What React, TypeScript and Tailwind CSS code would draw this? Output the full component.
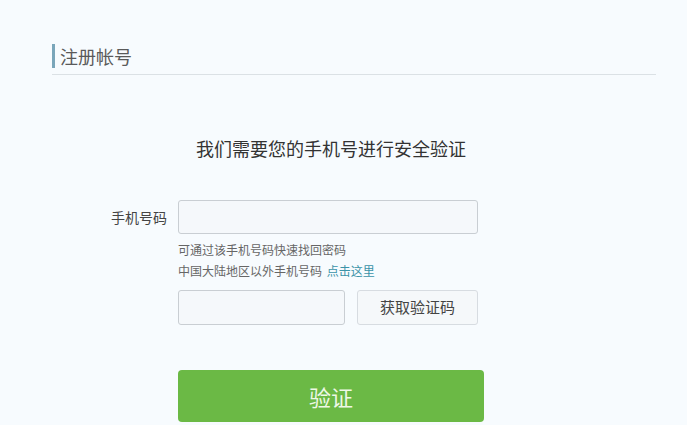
export default function App() {
  const font = { fontFamily: '"Noto Sans CJK SC", "Noto Sans", sans-serif' };
  return (
    <div className="w-[687px] h-[425px] bg-[#f7fbfe] overflow-hidden" style={font}>
      <div className="ml-[52px] mr-[31px] pt-[44px]">
        <div className="border-b border-[#dbe1e5] pb-[6px]">
          <div className="border-l-[3px] border-[#7aa6ba] pl-[5px] text-[18px] leading-[24px] text-[#5a5a5a]">注册帐号</div>
        </div>
      </div>
      <div className="ml-[100px] mt-[61px]">
        <div className="ml-[78px] w-[306px] text-center text-[18px] leading-[24px] text-[#333]">我们需要您的手机号进行安全验证</div>
        <div className="mt-[40px] flex items-center">
          <div className="w-[78px] pr-[11px] text-right text-[14px] text-[#444]">手机号码</div>
          <input className="w-[300px] h-[34px] rounded-[3px] border border-[#c9ced3] bg-[#f5f8fb] outline-none" />
        </div>
        <div className="ml-[78px] mt-[5px] text-[12px] leading-[21px] text-[#666]">
          <div>可通过该手机号码快速找回密码</div>
          <div>
            中国大陆地区以外手机号码 <span className="ml-[2px] text-[#3b93a8]">点击这里</span>
          </div>
        </div>
        <div className="ml-[78px] mt-[9px] flex gap-[12px]">
          <input className="w-[167px] h-[35px] rounded-[3px] border border-[#c9ced3] bg-[#f5f8fb] outline-none" />
          <button className="w-[121px] h-[35px] rounded-[3px] border border-[#d7dce1] bg-[#f5f8fa] text-[15px] text-[#444]">获取验证码</button>
        </div>
        <button className="ml-[78px] mt-[45px] w-[306px] h-[52px] rounded-[4px] bg-[#6bb945] text-[22px] text-[#eef8e6]">验证</button>
      </div>
    </div>
  );
}
